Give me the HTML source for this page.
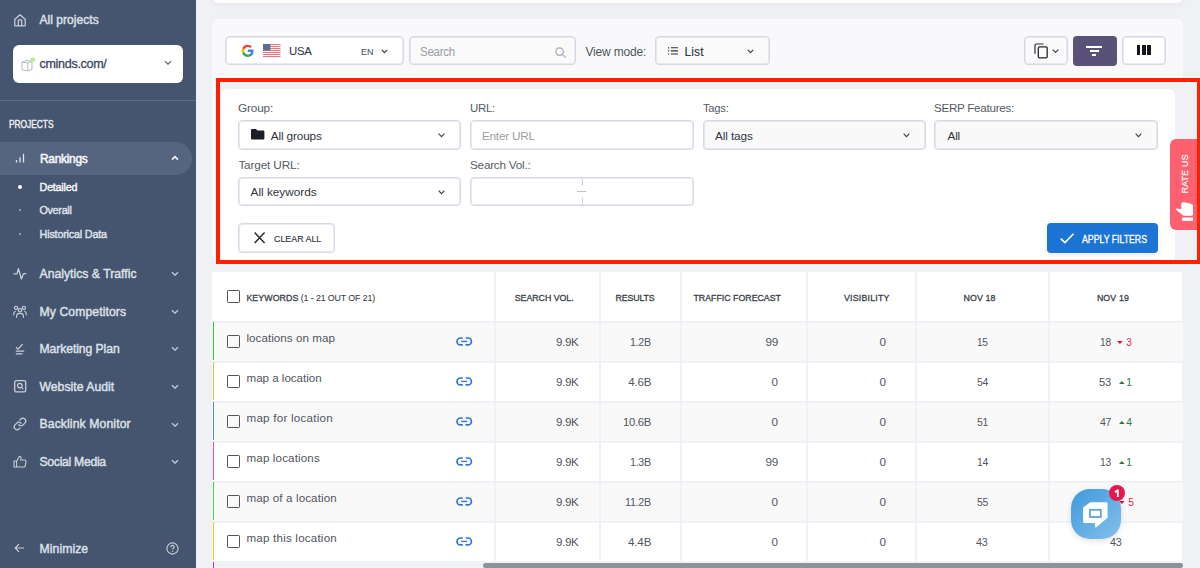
<!DOCTYPE html>
<html><head><meta charset="utf-8">
<style>
html,body{margin:0;padding:0;}
body{width:1200px;height:568px;overflow:hidden;position:relative;background:#f0f1f5;font-family:"Liberation Sans",sans-serif;}
.t{position:absolute;white-space:nowrap;line-height:1;}
svg{overflow:visible;}
</style></head><body>
<div style="position:absolute;left:0px;top:0px;width:196px;height:568px;background:#46556f;"></div>
<svg style="position:absolute;left:14px;top:14px" width="12" height="13" viewBox="0 0 12 13"><path d="M0.8 11.4V5.3L6 0.8L11.2 5.3V11.4Q11.2 11.9 10.7 11.9H1.3Q0.8 11.9 0.8 11.4Z M4.3 11.9V6.6Q4.3 5.9 5 5.9H7Q7.7 5.9 7.7 6.6V11.9" fill="none" stroke="#c9ced8" stroke-width="1.25" stroke-linejoin="round"/></svg>
<div class="t" style="left:39.50px;top:14px;font-size:12px;color:#dde1e8;-webkit-text-stroke:0.42px #dde1e8;letter-spacing:0.046px;">All projects</div>
<div style="position:absolute;left:13px;top:45px;width:170px;height:38px;background:#fff;border-radius:6px;"></div>
<svg style="position:absolute;left:21px;top:57px" width="15" height="15" viewBox="0 0 15 15"><path d="M1 5.2L5 3.6L11 4.4L11 12.2L6.8 13.8L1 12.8Z M1 5.2L6.8 6L11 4.4 M6.8 6V13.8" fill="none" stroke="#b4b7bd" stroke-width="0.95" stroke-linejoin="round"/><rect x="9.8" y="0.4" width="4.4" height="4.4" rx="1.6" fill="#b3ef8f"/></svg>
<div class="t" style="left:39.50px;top:58px;font-size:12.5px;color:#3a4660;-webkit-text-stroke:0.3px #3a4660;letter-spacing:-0.286px;">cminds.com/</div>
<svg style="position:absolute;left:164px;top:60px" width="8" height="6" viewBox="0 0 8 6"><path d="M1 1.2L4 4.2L7 1.2" fill="none" stroke="#555c66" stroke-width="1.2"/></svg>
<div style="position:absolute;left:0px;top:100px;width:196px;height:1px;background:#5e6c86;"></div>
<div class="t" style="left:8.80px;top:120px;font-size:10.3px;color:#eef0f4;transform:scaleX(0.8152);transform-origin:0.00px 0;-webkit-text-stroke:0.4px #eef0f4;letter-spacing:-0.050px;">PROJECTS</div>
<div style="position:absolute;left:0px;top:141.7px;width:191.5px;height:33.3px;background:#56657f;border-radius:0 17px 17px 0;"></div>
<svg style="position:absolute;left:15px;top:153px" width="10" height="10" viewBox="0 0 10 10"><path d="M1.5 9.5V7 M5 9.5V4.2 M8.5 9.5V0.8" stroke="#dfe3ea" stroke-width="1.3"/></svg>
<div class="t" style="left:39.75px;top:153px;font-size:12.2px;color:#f6f7f9;transform:scaleX(0.9793);transform-origin:0.00px 0;-webkit-text-stroke:0.5px #f6f7f9;letter-spacing:-0.300px;">Rankings</div>
<svg style="position:absolute;left:171px;top:155px" width="8" height="6" viewBox="0 0 8 6"><path d="M1 4.6L4 1.6L7 4.6" fill="none" stroke="#f4f5f8" stroke-width="1.5"/></svg>
<div style="position:absolute;left:18px;top:184.7px;width:4px;height:4px;background:#fff;border-radius:50%;"></div>
<div class="t" style="left:39.60px;top:182px;font-size:10.8px;color:#f4f5f8;-webkit-text-stroke:0.42px #f4f5f8;letter-spacing:-0.261px;">Detailed</div>
<div style="position:absolute;left:19px;top:209.2px;width:2px;height:2px;background:#8e98aa;"></div>
<div class="t" style="left:39.40px;top:205px;font-size:10.8px;color:#dde1e8;-webkit-text-stroke:0.42px #dde1e8;letter-spacing:-0.286px;">Overall</div>
<div style="position:absolute;left:19px;top:232.5px;width:2px;height:2px;background:#8e98aa;"></div>
<div class="t" style="left:39.60px;top:229px;font-size:10.8px;color:#dde1e8;-webkit-text-stroke:0.42px #dde1e8;letter-spacing:-0.195px;">Historical Data</div>
<div class="t" style="left:39.50px;top:268px;font-size:12.2px;color:#dde1e8;-webkit-text-stroke:0.42px #dde1e8;letter-spacing:0.020px;">Analytics &amp; Traffic</div>
<svg style="position:absolute;left:171px;top:271.0px" width="8" height="6" viewBox="0 0 8 6"><path d="M1 1.2L4 4.2L7 1.2" fill="none" stroke="#c9ced8" stroke-width="1.3"/></svg>
<div class="t" style="left:39.50px;top:306px;font-size:12.2px;color:#dde1e8;-webkit-text-stroke:0.42px #dde1e8;letter-spacing:0.098px;">My Competitors</div>
<svg style="position:absolute;left:171px;top:308.9px" width="8" height="6" viewBox="0 0 8 6"><path d="M1 1.2L4 4.2L7 1.2" fill="none" stroke="#c9ced8" stroke-width="1.3"/></svg>
<div class="t" style="left:39.50px;top:343px;font-size:12.2px;color:#dde1e8;-webkit-text-stroke:0.42px #dde1e8;letter-spacing:-0.083px;">Marketing Plan</div>
<svg style="position:absolute;left:171px;top:346.4px" width="8" height="6" viewBox="0 0 8 6"><path d="M1 1.2L4 4.2L7 1.2" fill="none" stroke="#c9ced8" stroke-width="1.3"/></svg>
<div class="t" style="left:39.50px;top:381px;font-size:12.2px;color:#dde1e8;-webkit-text-stroke:0.42px #dde1e8;letter-spacing:0.027px;">Website Audit</div>
<svg style="position:absolute;left:171px;top:384.0px" width="8" height="6" viewBox="0 0 8 6"><path d="M1 1.2L4 4.2L7 1.2" fill="none" stroke="#c9ced8" stroke-width="1.3"/></svg>
<div class="t" style="left:39.50px;top:418px;font-size:12.2px;color:#dde1e8;-webkit-text-stroke:0.42px #dde1e8;letter-spacing:0.113px;">Backlink Monitor</div>
<svg style="position:absolute;left:171px;top:421.5px" width="8" height="6" viewBox="0 0 8 6"><path d="M1 1.2L4 4.2L7 1.2" fill="none" stroke="#c9ced8" stroke-width="1.3"/></svg>
<div class="t" style="left:39.50px;top:456px;font-size:12.2px;color:#dde1e8;-webkit-text-stroke:0.42px #dde1e8;letter-spacing:-0.287px;">Social Media</div>
<svg style="position:absolute;left:171px;top:458.9px" width="8" height="6" viewBox="0 0 8 6"><path d="M1 1.2L4 4.2L7 1.2" fill="none" stroke="#c9ced8" stroke-width="1.3"/></svg>
<svg style="position:absolute;left:13px;top:267px" width="14" height="14" viewBox="0 0 14 14"><path d="M1 6.8H3.6Q4 6.8 4.2 6.2L5.4 1.6L8.4 12L10.2 7.3Q10.5 6.7 11 6.7H12.8" fill="none" stroke="#c9ced8" stroke-width="1.3" stroke-linejoin="round" stroke-linecap="round"/></svg>
<svg style="position:absolute;left:13px;top:305px" width="14" height="13" viewBox="0 0 14 13"><g fill="none" stroke="#c9ced8" stroke-width="1.15" stroke-linecap="round"><circle cx="3" cy="2.8" r="1.6"/><circle cx="10.9" cy="2.8" r="1.6"/><circle cx="7" cy="5.3" r="1.7"/><path d="M3.6 12.3V11C3.6 9.2 5 8.3 7 8.3S10.4 9.2 10.4 11V12.3 M0.6 9.7C0.6 7.8 1.2 6.8 2.3 6.3 M13.4 9.7C13.4 7.8 12.8 6.8 11.7 6.3"/></g></svg>
<svg style="position:absolute;left:15px;top:342.5px" width="10" height="12" viewBox="0 0 10 12"><path d="M1 4.2L3 6.2L7.6 1.2" fill="none" stroke="#c9ced8" stroke-width="1.25"/><path d="M0.8 8.2H9.2 M0.8 10.9H7.4" fill="none" stroke="#c9ced8" stroke-width="1.3"/></svg>
<svg style="position:absolute;left:13.8px;top:380px" width="13" height="13" viewBox="0 0 13 13"><rect x="0.7" y="0.7" width="11" height="11.2" rx="1.6" fill="none" stroke="#c9ced8" stroke-width="1.3"/><circle cx="5.8" cy="5.6" r="2.3" fill="none" stroke="#c9ced8" stroke-width="1.2"/><path d="M7.5 7.3L9.2 9" stroke="#c9ced8" stroke-width="1.2"/></svg>
<svg style="position:absolute;left:13px;top:417px" width="14" height="14" viewBox="0 0 14 14"><g transform="scale(0.58)"><path d="M10 13a5 5 0 0 0 7.54.54l3-3a5 5 0 0 0-7.07-7.07l-1.72 1.71 M14 11a5 5 0 0 0-7.54-.54l-3 3a5 5 0 0 0 7.07 7.07l1.71-1.71" fill="none" stroke="#c9ced8" stroke-width="2.1" stroke-linecap="round"/></g></svg>
<svg style="position:absolute;left:13px;top:455px" width="14" height="13" viewBox="0 0 14 13"><path d="M1 6H3.6V12H1Z M3.6 6.2L6.4 1.2C7.6 1.2 8.2 2 8 3.2L7.6 5H11.6C12.6 5 13.2 5.8 13 6.8L12.2 11C12 11.7 11.5 12 10.8 12H3.6" fill="none" stroke="#c9ced8" stroke-width="1.1" stroke-linejoin="round"/></svg>
<svg style="position:absolute;left:14px;top:543px" width="11" height="10" viewBox="0 0 11 10"><path d="M10 5H1.5 M5 1.2L1.2 5L5 8.8" fill="none" stroke="#c9ced8" stroke-width="1.2"/></svg>
<div class="t" style="left:39.50px;top:543px;font-size:12.2px;color:#dde1e8;-webkit-text-stroke:0.42px #dde1e8;letter-spacing:0.082px;">Minimize</div>
<svg style="position:absolute;left:166px;top:541.5px" width="13" height="13" viewBox="0 0 13 13"><circle cx="6.5" cy="6.5" r="5.6" fill="none" stroke="#c9ced8" stroke-width="1.1"/><path d="M4.8 5.2C4.8 4 5.6 3.4 6.5 3.4S8.2 4 8.2 5C8.2 6.2 6.6 6.3 6.6 7.6" fill="none" stroke="#c9ced8" stroke-width="1.1"/><circle cx="6.6" cy="9.4" r="0.7" fill="#c9ced8"/></svg>
<div style="position:absolute;left:213px;top:-12px;width:970px;height:14.6px;background:#fff;border-radius:6px;box-shadow:0 2px 5px rgba(60,70,100,0.05);"></div>
<div style="position:absolute;left:212px;top:19px;width:971px;height:240px;background:#f9f9fb;border-radius:6px;"></div>
<div style="position:absolute;left:225px;top:36px;width:179px;height:29px;box-sizing:border-box;border:1px solid #d6d9e5;box-shadow:inset 0 0 0 1px rgba(214,217,229,0.55);border-radius:4px;background:#fff;"></div>
<svg style="position:absolute;left:241px;top:43.8px" width="13.5" height="13.5" viewBox="0 0 13.5 13.5"><path d="M12.6 6.9c0-.45-.04-.9-.12-1.3H6.75v2.5h3.3a2.8 2.8 0 0 1-1.2 1.85v1.55h1.95c1.15-1.05 1.8-2.6 1.8-4.6z" fill="#4285F4"/><path d="M6.75 12.9c1.65 0 3.05-.55 4.05-1.45L8.85 9.9c-.55.35-1.25.6-2.1.6-1.6 0-2.95-1.1-3.45-2.55H1.3v1.6a6.1 6.1 0 0 0 5.45 3.35z" fill="#34A853"/><path d="M3.3 7.95a3.7 3.7 0 0 1 0-2.35V4H1.3a6.1 6.1 0 0 0 0 5.5z" fill="#FBBC05"/><path d="M6.75 3.1c.9 0 1.7.3 2.35.9l1.75-1.75A5.9 5.9 0 0 0 6.75.65 6.1 6.1 0 0 0 1.3 4l2 1.6C3.8 4.15 5.15 3.1 6.75 3.1z" fill="#EA4335"/></svg>
<svg style="position:absolute;left:262.5px;top:43.8px" width="17.5" height="14" viewBox="0 0 17.5 14"><rect x="0" y="0" width="17.5" height="14" rx="1" fill="#fff"/><rect x="0" y="0" width="17.5" height="1.1" fill="#e27782"/><rect x="0" y="2" width="17.5" height="1.1" fill="#e27782"/><rect x="0" y="4" width="17.5" height="1.1" fill="#e27782"/><rect x="0" y="6" width="17.5" height="1.1" fill="#e27782"/><rect x="0" y="8" width="17.5" height="1.1" fill="#e27782"/><rect x="0" y="10" width="17.5" height="1.1" fill="#e27782"/><rect x="0" y="12" width="17.5" height="1.1" fill="#e27782"/><rect x="0" y="0" width="7.5" height="6.5" fill="#5f6d90"/></svg>
<div class="t" style="left:288.75px;top:46px;font-size:11.8px;color:#343a44;transform:scaleX(0.9615);transform-origin:0.00px 0;-webkit-text-stroke:0.1px #343a44;letter-spacing:-0.300px;">USA</div>
<div class="t" style="left:361.00px;top:47px;font-size:9.8px;color:#444a54;transform:scaleX(0.9143);transform-origin:0.00px 0;letter-spacing:-0.050px;">EN</div>
<svg style="position:absolute;left:380.5px;top:48.5px" width="7" height="5" viewBox="0 0 7 5"><path d="M0.8 0.8L3.5 3.6L6.2 0.8" fill="none" stroke="#3a3f48" stroke-width="1.2"/></svg>
<div style="position:absolute;left:409px;top:36px;width:167px;height:29px;box-sizing:border-box;border:1px solid #d6d9e5;box-shadow:inset 0 0 0 1px rgba(214,217,229,0.55);border-radius:4px;background:#fafafb;"></div>
<div class="t" style="left:420.30px;top:46px;font-size:12px;color:#9a9ea6;transform:scaleX(0.9612);transform-origin:0.00px 0;letter-spacing:-0.300px;">Search</div>
<svg style="position:absolute;left:555px;top:46.5px" width="12" height="11" viewBox="0 0 12 11"><circle cx="4.6" cy="4.6" r="3.8" fill="none" stroke="#a5a9b0" stroke-width="1.2"/><path d="M7.4 7.4L10.8 10.6" stroke="#a5a9b0" stroke-width="1.2"/></svg>
<div class="t" style="left:585.40px;top:46px;font-size:12px;color:#50565e;letter-spacing:-0.176px;">View mode:</div>
<div style="position:absolute;left:655px;top:36px;width:115px;height:29px;box-sizing:border-box;border:1px solid #d6d9e5;box-shadow:inset 0 0 0 1px rgba(214,217,229,0.55);border-radius:4px;background:#fafafb;"></div>
<svg style="position:absolute;left:668px;top:46.7px" width="10" height="8" viewBox="0 0 10 8"><path d="M0 0.8H1.2 M0 3.9H1.2 M0 7H1.2" stroke="#333" stroke-width="1.2"/><path d="M2.8 0.8H10 M2.8 3.9H10 M2.8 7H10" stroke="#333" stroke-width="1.1"/></svg>
<div class="t" style="left:684.50px;top:46px;font-size:12px;color:#30353d;-webkit-text-stroke:0.1px #30353d;letter-spacing:0.109px;">List</div>
<svg style="position:absolute;left:746.5px;top:49px" width="7" height="5" viewBox="0 0 7 5"><path d="M0.8 0.8L3.5 3.6L6.2 0.8" fill="none" stroke="#3a3f48" stroke-width="1.2"/></svg>
<div style="position:absolute;left:1024px;top:36px;width:44px;height:29px;box-sizing:border-box;border:1px solid #d6d9e5;box-shadow:inset 0 0 0 1px rgba(214,217,229,0.55);border-radius:4px;background:#fafafb;"></div>
<svg style="position:absolute;left:1033.5px;top:43px" width="14" height="15.5" viewBox="0 0 14 15.5"><path d="M1 10.8V2.2C1 1.5 1.5 1 2.2 1H9.5" fill="none" stroke="#2a2e35" stroke-width="1.2"/><rect x="4.3" y="3.8" width="8.9" height="11" rx="1.2" fill="none" stroke="#22262c" stroke-width="1.3"/></svg>
<svg style="position:absolute;left:1052.3px;top:48.6px" width="7" height="5" viewBox="0 0 7 5"><path d="M0.7 0.7L3.5 3.5L6.3 0.7" fill="none" stroke="#3a3f48" stroke-width="1.1"/></svg>
<div style="position:absolute;left:1073px;top:36px;width:44px;height:30px;border-radius:4px;background:#5a5178;"></div>
<div style="position:absolute;left:1086.3px;top:46px;width:15.7px;height:2px;background:#fff;"></div>
<div style="position:absolute;left:1089.7px;top:50px;width:9.3px;height:2px;background:#fff;"></div>
<div style="position:absolute;left:1092px;top:54px;width:4px;height:1.8px;background:#fff;"></div>
<div style="position:absolute;left:1122px;top:36px;width:44px;height:29px;box-sizing:border-box;border:1px solid #d6d9e5;box-shadow:inset 0 0 0 1px rgba(214,217,229,0.55);border-radius:4px;background:#fff;"></div>
<div style="position:absolute;left:1136.7px;top:45px;width:3.6px;height:10.3px;background:#15171c;"></div>
<div style="position:absolute;left:1142px;top:45px;width:3.6px;height:10.3px;background:#15171c;"></div>
<div style="position:absolute;left:1147.2px;top:45px;width:3.6px;height:10.3px;background:#15171c;"></div>
<div style="position:absolute;left:216px;top:78px;width:984px;height:186px;background:#f0f1f5;"></div>
<div style="position:absolute;left:221px;top:89px;width:954px;height:175px;background:#fff;border-radius:6px;"></div>
<div class="t" style="left:237.90px;top:103px;font-size:11.8px;color:#555b63;letter-spacing:-0.135px;">Group:</div>
<div class="t" style="left:470.00px;top:103px;font-size:11.8px;color:#555b63;transform:scaleX(0.9738);transform-origin:0.00px 0;letter-spacing:-0.300px;">URL:</div>
<div class="t" style="left:702.80px;top:103px;font-size:11.8px;color:#555b63;transform:scaleX(0.9555);transform-origin:0.00px 0;letter-spacing:-0.300px;">Tags:</div>
<div class="t" style="left:934.40px;top:103px;font-size:11.8px;color:#555b63;transform:scaleX(0.9884);transform-origin:0.00px 0;letter-spacing:-0.300px;">SERP Features:</div>
<div style="position:absolute;left:238px;top:120px;width:223px;height:30px;box-sizing:border-box;border:1px solid #d6d9e5;box-shadow:inset 0 0 0 1px rgba(214,217,229,0.55);border-radius:4px;background:#fff;"></div>
<div style="position:absolute;left:470px;top:120px;width:224px;height:30px;box-sizing:border-box;border:1px solid #d6d9e5;box-shadow:inset 0 0 0 1px rgba(214,217,229,0.55);border-radius:4px;background:#fff;"></div>
<div style="position:absolute;left:703px;top:120px;width:223px;height:30px;box-sizing:border-box;border:1px solid #d6d9e5;box-shadow:inset 0 0 0 1px rgba(214,217,229,0.55);border-radius:4px;background:#f9f9fa;"></div>
<div style="position:absolute;left:934px;top:120px;width:224px;height:30px;box-sizing:border-box;border:1px solid #d6d9e5;box-shadow:inset 0 0 0 1px rgba(214,217,229,0.55);border-radius:4px;background:#f9f9fa;"></div>
<svg style="position:absolute;left:250.6px;top:129.3px" width="13.4" height="10.6" viewBox="0 0 13.4 10.6"><path d="M0 1.2C0 .5.5 0 1.2 0H5L6.4 1.6H12.2C12.9 1.6 13.4 2.1 13.4 2.8V9.4C13.4 10.1 12.9 10.6 12.2 10.6H1.2C.5 10.6 0 10.1 0 9.4Z" fill="#1b1e27"/></svg>
<div class="t" style="left:270.70px;top:131px;font-size:11.8px;color:#30353d;letter-spacing:-0.142px;">All groups</div>
<div class="t" style="left:481.90px;top:131px;font-size:11.8px;color:#9a9ea6;letter-spacing:-0.235px;">Enter URL</div>
<div class="t" style="left:715.10px;top:131px;font-size:11.8px;color:#30353d;letter-spacing:-0.127px;">All tags</div>
<div class="t" style="left:947.50px;top:131px;font-size:11.8px;color:#30353d;letter-spacing:-0.205px;">All</div>
<svg style="position:absolute;left:438.2px;top:133px" width="7" height="4.4" viewBox="0 0 7 4.4"><path d="M0.6 0.6L3.5 3.6L6.4 0.6" fill="none" stroke="#3a3f48" stroke-width="1.15"/></svg>
<svg style="position:absolute;left:902.8px;top:133px" width="7" height="4.4" viewBox="0 0 7 4.4"><path d="M0.6 0.6L3.5 3.6L6.4 0.6" fill="none" stroke="#3a3f48" stroke-width="1.15"/></svg>
<svg style="position:absolute;left:1135.2px;top:133px" width="7" height="4.4" viewBox="0 0 7 4.4"><path d="M0.6 0.6L3.5 3.6L6.4 0.6" fill="none" stroke="#3a3f48" stroke-width="1.15"/></svg>
<div class="t" style="left:238.40px;top:160px;font-size:11.8px;color:#555b63;letter-spacing:-0.165px;">Target URL:</div>
<div class="t" style="left:470.00px;top:160px;font-size:11.8px;color:#555b63;letter-spacing:-0.266px;">Search Vol.:</div>
<div style="position:absolute;left:238px;top:177px;width:223px;height:29px;box-sizing:border-box;border:1px solid #d6d9e5;box-shadow:inset 0 0 0 1px rgba(214,217,229,0.55);border-radius:4px;background:#fff;"></div>
<div class="t" style="left:250.60px;top:187px;font-size:11.8px;color:#30353d;letter-spacing:-0.021px;">All keywords</div>
<svg style="position:absolute;left:438.2px;top:190px" width="7" height="4.4" viewBox="0 0 7 4.4"><path d="M0.6 0.6L3.5 3.6L6.4 0.6" fill="none" stroke="#3a3f48" stroke-width="1.15"/></svg>
<div style="position:absolute;left:470px;top:177px;width:224px;height:29px;box-sizing:border-box;border:1px solid #d6d9e5;box-shadow:inset 0 0 0 1px rgba(214,217,229,0.55);border-radius:4px;background:#fff;"></div>
<div style="position:absolute;left:581.6px;top:178.5px;width:1.2px;height:7px;background:#cdd0da;"></div>
<div style="position:absolute;left:581.6px;top:197.5px;width:1.2px;height:7px;background:#cdd0da;"></div>
<div style="position:absolute;left:577px;top:190.6px;width:9px;height:1.3px;background:#bfc3cc;"></div>
<div style="position:absolute;left:238px;top:223px;width:97px;height:30px;box-sizing:border-box;border:1px solid #d6d9e5;box-shadow:inset 0 0 0 1px rgba(214,217,229,0.55);border-radius:4px;background:#fff;"></div>
<svg style="position:absolute;left:253.7px;top:232.4px" width="11.2" height="11.5" viewBox="0 0 11.2 11.5"><path d="M0.6 0.6L10.6 10.9 M10.6 0.6L0.6 10.9" stroke="#22262c" stroke-width="1.4"/></svg>
<div class="t" style="left:273.90px;top:234px;font-size:9.4px;color:#30353d;transform:scaleX(0.9450);transform-origin:0.00px 0;-webkit-text-stroke:0.15px #30353d;">CLEAR ALL</div>
<div style="position:absolute;left:1046.9px;top:223.3px;width:111.1px;height:29.7px;border-radius:4px;background:#1c74d4;box-shadow:0 2px 5px rgba(0,0,0,0.08);"></div>
<svg style="position:absolute;left:1060px;top:233px" width="14.4" height="10.7" viewBox="0 0 14.4 10.7"><path d="M0.8 5.6L4.9 9.6L13.6 0.8" fill="none" stroke="#fff" stroke-width="1.6"/></svg>
<div class="t" style="left:1081.60px;top:235px;font-size:10.2px;color:#ffffff;transform:scaleX(0.8639);transform-origin:0.00px 0;-webkit-text-stroke:0.3px #ffffff;letter-spacing:-0.050px;">APPLY FILTERS</div>
<div style="position:absolute;left:212px;top:272px;width:970px;height:296px;background:#fff;"></div>
<div style="position:absolute;left:212px;top:321px;width:971px;height:40px;background:#f9f9fa;"></div>
<div style="position:absolute;left:212px;top:401px;width:971px;height:40px;background:#f9f9fa;"></div>
<div style="position:absolute;left:212px;top:481px;width:971px;height:40px;background:#f9f9fa;"></div>
<div style="position:absolute;left:212px;top:321px;width:971px;height:2px;background:#f0f1f6;"></div>
<div style="position:absolute;left:212px;top:361px;width:971px;height:2px;background:#f0f1f6;"></div>
<div style="position:absolute;left:212px;top:401px;width:971px;height:2px;background:#f0f1f6;"></div>
<div style="position:absolute;left:212px;top:441px;width:971px;height:2px;background:#f0f1f6;"></div>
<div style="position:absolute;left:212px;top:481px;width:971px;height:2px;background:#f0f1f6;"></div>
<div style="position:absolute;left:212px;top:521px;width:971px;height:2px;background:#f0f1f6;"></div>
<div style="position:absolute;left:212px;top:561px;width:971px;height:2px;background:#f0f1f6;"></div>
<div style="position:absolute;left:493.8px;top:272px;width:2px;height:296px;background:#f0f1f6;"></div>
<div style="position:absolute;left:598.7px;top:272px;width:2px;height:296px;background:#f0f1f6;"></div>
<div style="position:absolute;left:679.6px;top:272px;width:2px;height:296px;background:#f0f1f6;"></div>
<div style="position:absolute;left:806.2px;top:272px;width:2px;height:296px;background:#f0f1f6;"></div>
<div style="position:absolute;left:914.6px;top:272px;width:2px;height:296px;background:#f0f1f6;"></div>
<div style="position:absolute;left:1047.9px;top:272px;width:2px;height:296px;background:#f0f1f6;"></div>
<div style="position:absolute;left:212.5px;top:322px;width:1.5px;height:38px;background:#2ad62a;"></div>
<div style="position:absolute;left:212.5px;top:362px;width:1.5px;height:38px;background:#c9c93a;"></div>
<div style="position:absolute;left:212.5px;top:402px;width:1.5px;height:38px;background:#4a90e2;"></div>
<div style="position:absolute;left:212.5px;top:442px;width:1.5px;height:38px;background:#ff45b5;"></div>
<div style="position:absolute;left:212.5px;top:482px;width:1.5px;height:38px;background:#3ae03a;"></div>
<div style="position:absolute;left:212.5px;top:522px;width:1.5px;height:38px;background:#f2c81e;"></div>
<div class="t" style="left:246.40px;top:294px;font-size:8.8px;color:#3b4149;-webkit-text-stroke:0.3px #3b4149;letter-spacing:0.094px;">KEYWORDS</div>
<div class="t" style="left:300.70px;top:294px;font-size:8.8px;color:#3b4149;-webkit-text-stroke:0.1px #3b4149;letter-spacing:-0.089px;">(1 - 21 OUT OF 21)</div>
<div style="position:absolute;left:227.3px;top:290.3px;width:12.8px;height:12.4px;box-sizing:border-box;border:1.8px solid #52565c;border-radius:1.2px;"></div>
<div class="t" style="left:514.70px;top:294px;font-size:8.8px;color:#3b4149;-webkit-text-stroke:0.3px #3b4149;letter-spacing:-0.017px;">SEARCH VOL.</div>
<div class="t" style="left:615.50px;top:294px;font-size:8.8px;color:#3b4149;-webkit-text-stroke:0.3px #3b4149;letter-spacing:-0.122px;">RESULTS</div>
<div class="t" style="left:693.50px;top:294px;font-size:8.8px;color:#3b4149;-webkit-text-stroke:0.3px #3b4149;">TRAFFIC FORECAST</div>
<div class="t" style="left:844.00px;top:294px;font-size:8.8px;color:#3b4149;-webkit-text-stroke:0.3px #3b4149;letter-spacing:0.219px;">VISIBILITY</div>
<div class="t" style="left:963.60px;top:294px;font-size:8.8px;color:#3b4149;-webkit-text-stroke:0.3px #3b4149;letter-spacing:0.100px;">NOV 18</div>
<div class="t" style="left:1096.90px;top:294px;font-size:8.8px;color:#3b4149;-webkit-text-stroke:0.3px #3b4149;letter-spacing:0.120px;">NOV 19</div>
<div style="position:absolute;left:227.3px;top:335.2px;width:12.8px;height:12.4px;box-sizing:border-box;border:1.8px solid #52565c;border-radius:1.2px;"></div>
<div class="t" style="left:246.50px;top:332px;font-size:11.6px;color:#50555d;letter-spacing:0.047px;">locations on map</div>
<svg style="position:absolute;left:456px;top:337.2px" width="16.5" height="8.8" viewBox="0 0 16.5 8.8"><path d="M6.8 1H4.4A3.4 3.4 0 0 0 4.4 7.8H6.8 M9.6 1H12A3.4 3.4 0 0 1 12 7.8H9.6" fill="none" stroke="#2b79d6" stroke-width="1.7"/><path d="M5.2 4.4H11.2" stroke="#2b79d6" stroke-width="1.4"/></svg>
<div class="t" style="left:555.50px;top:336px;font-size:11.6px;color:#50555d;transform:scaleX(0.9930);transform-origin:0.00px 0;letter-spacing:-0.300px;">9.9K</div>
<div class="t" style="left:630.40px;top:336px;font-size:11.6px;color:#50555d;transform:scaleX(0.9146);transform-origin:0.00px 0;letter-spacing:-0.300px;">1.2B</div>
<div class="t" style="left:765.50px;top:336px;font-size:11.6px;color:#50555d;letter-spacing:-0.299px;">99</div>
<div class="t" style="left:879.40px;top:336px;font-size:11.6px;color:#50555d;">0</div>
<div class="t" style="left:976.80px;top:336px;font-size:11.6px;color:#50555d;transform:scaleX(0.8731);transform-origin:0.00px 0;letter-spacing:-0.300px;">15</div>
<div class="t" style="left:1100.45px;top:336px;font-size:11.6px;color:#50555d;transform:scaleX(0.8770);transform-origin:0.00px 0;letter-spacing:-0.300px;">18</div>
<svg style="position:absolute;left:1117.2px;top:341.4px" width="5.8" height="3" viewBox="0 0 5.8 3"><path d="M0.1 0.1H5.7L2.9 2.9Z" fill="#e0102a"/></svg>
<div class="t" style="left:1126.20px;top:338px;font-size:10.2px;color:#e2233b;">3</div>
<div style="position:absolute;left:227.3px;top:375.2px;width:12.8px;height:12.4px;box-sizing:border-box;border:1.8px solid #52565c;border-radius:1.2px;"></div>
<div class="t" style="left:246.50px;top:372px;font-size:11.6px;color:#50555d;letter-spacing:-0.019px;">map a location</div>
<svg style="position:absolute;left:456px;top:377.2px" width="16.5" height="8.8" viewBox="0 0 16.5 8.8"><path d="M6.8 1H4.4A3.4 3.4 0 0 0 4.4 7.8H6.8 M9.6 1H12A3.4 3.4 0 0 1 12 7.8H9.6" fill="none" stroke="#2b79d6" stroke-width="1.7"/><path d="M5.2 4.4H11.2" stroke="#2b79d6" stroke-width="1.4"/></svg>
<div class="t" style="left:555.50px;top:376px;font-size:11.6px;color:#50555d;transform:scaleX(0.9930);transform-origin:0.00px 0;letter-spacing:-0.300px;">9.9K</div>
<div class="t" style="left:628.20px;top:376px;font-size:11.6px;color:#50555d;letter-spacing:-0.220px;">4.6B</div>
<div class="t" style="left:771.40px;top:376px;font-size:11.6px;color:#50555d;">0</div>
<div class="t" style="left:879.40px;top:376px;font-size:11.6px;color:#50555d;">0</div>
<div class="t" style="left:976.65px;top:376px;font-size:11.6px;color:#50555d;transform:scaleX(0.8969);transform-origin:0.00px 0;letter-spacing:-0.300px;">54</div>
<div class="t" style="left:1099.40px;top:376px;font-size:11.6px;color:#50555d;transform:scaleX(0.9604);transform-origin:0.00px 0;letter-spacing:-0.300px;">53</div>
<svg style="position:absolute;left:1118.8px;top:381.2px" width="5.8" height="3" viewBox="0 0 5.8 3"><path d="M0.1 2.9H5.7L2.9 0.1Z" fill="#2a7247"/></svg>
<div class="t" style="left:1126.20px;top:378px;font-size:10.2px;color:#2f7a4a;">1</div>
<div style="position:absolute;left:227.3px;top:415.2px;width:12.8px;height:12.4px;box-sizing:border-box;border:1.8px solid #52565c;border-radius:1.2px;"></div>
<div class="t" style="left:246.50px;top:412px;font-size:11.6px;color:#50555d;letter-spacing:0.251px;">map for location</div>
<svg style="position:absolute;left:456px;top:417.2px" width="16.5" height="8.8" viewBox="0 0 16.5 8.8"><path d="M6.8 1H4.4A3.4 3.4 0 0 0 4.4 7.8H6.8 M9.6 1H12A3.4 3.4 0 0 1 12 7.8H9.6" fill="none" stroke="#2b79d6" stroke-width="1.7"/><path d="M5.2 4.4H11.2" stroke="#2b79d6" stroke-width="1.4"/></svg>
<div class="t" style="left:555.50px;top:416px;font-size:11.6px;color:#50555d;transform:scaleX(0.9930);transform-origin:0.00px 0;letter-spacing:-0.300px;">9.9K</div>
<div class="t" style="left:623.00px;top:416px;font-size:11.6px;color:#50555d;transform:scaleX(0.9756);transform-origin:0.00px 0;letter-spacing:-0.300px;">10.6B</div>
<div class="t" style="left:771.40px;top:416px;font-size:11.6px;color:#50555d;">0</div>
<div class="t" style="left:879.40px;top:416px;font-size:11.6px;color:#50555d;">0</div>
<div class="t" style="left:976.65px;top:416px;font-size:11.6px;color:#50555d;transform:scaleX(0.8969);transform-origin:0.00px 0;letter-spacing:-0.300px;">51</div>
<div class="t" style="left:1100.00px;top:416px;font-size:11.6px;color:#50555d;transform:scaleX(0.9128);transform-origin:0.00px 0;letter-spacing:-0.300px;">47</div>
<svg style="position:absolute;left:1118.8px;top:421.2px" width="5.8" height="3" viewBox="0 0 5.8 3"><path d="M0.1 2.9H5.7L2.9 0.1Z" fill="#2a7247"/></svg>
<div class="t" style="left:1126.20px;top:418px;font-size:10.2px;color:#2f7a4a;">4</div>
<div style="position:absolute;left:227.3px;top:455.2px;width:12.8px;height:12.4px;box-sizing:border-box;border:1.8px solid #52565c;border-radius:1.2px;"></div>
<div class="t" style="left:246.50px;top:452px;font-size:11.6px;color:#50555d;letter-spacing:0.144px;">map locations</div>
<svg style="position:absolute;left:456px;top:457.2px" width="16.5" height="8.8" viewBox="0 0 16.5 8.8"><path d="M6.8 1H4.4A3.4 3.4 0 0 0 4.4 7.8H6.8 M9.6 1H12A3.4 3.4 0 0 1 12 7.8H9.6" fill="none" stroke="#2b79d6" stroke-width="1.7"/><path d="M5.2 4.4H11.2" stroke="#2b79d6" stroke-width="1.4"/></svg>
<div class="t" style="left:555.50px;top:456px;font-size:11.6px;color:#50555d;transform:scaleX(0.9930);transform-origin:0.00px 0;letter-spacing:-0.300px;">9.9K</div>
<div class="t" style="left:630.30px;top:456px;font-size:11.6px;color:#50555d;transform:scaleX(0.9189);transform-origin:0.00px 0;letter-spacing:-0.300px;">1.3B</div>
<div class="t" style="left:765.50px;top:456px;font-size:11.6px;color:#50555d;letter-spacing:-0.299px;">99</div>
<div class="t" style="left:879.40px;top:456px;font-size:11.6px;color:#50555d;">0</div>
<div class="t" style="left:976.65px;top:456px;font-size:11.6px;color:#50555d;transform:scaleX(0.8969);transform-origin:0.00px 0;letter-spacing:-0.300px;">14</div>
<div class="t" style="left:1100.30px;top:456px;font-size:11.6px;color:#50555d;transform:scaleX(0.8889);transform-origin:0.00px 0;letter-spacing:-0.300px;">13</div>
<svg style="position:absolute;left:1118.8px;top:461.2px" width="5.8" height="3" viewBox="0 0 5.8 3"><path d="M0.1 2.9H5.7L2.9 0.1Z" fill="#2a7247"/></svg>
<div class="t" style="left:1126.20px;top:458px;font-size:10.2px;color:#2f7a4a;">1</div>
<div style="position:absolute;left:227.3px;top:495.2px;width:12.8px;height:12.4px;box-sizing:border-box;border:1.8px solid #52565c;border-radius:1.2px;"></div>
<div class="t" style="left:246.50px;top:492px;font-size:11.6px;color:#50555d;letter-spacing:0.122px;">map of a location</div>
<svg style="position:absolute;left:456px;top:497.2px" width="16.5" height="8.8" viewBox="0 0 16.5 8.8"><path d="M6.8 1H4.4A3.4 3.4 0 0 0 4.4 7.8H6.8 M9.6 1H12A3.4 3.4 0 0 1 12 7.8H9.6" fill="none" stroke="#2b79d6" stroke-width="1.7"/><path d="M5.2 4.4H11.2" stroke="#2b79d6" stroke-width="1.4"/></svg>
<div class="t" style="left:555.50px;top:496px;font-size:11.6px;color:#50555d;transform:scaleX(0.9930);transform-origin:0.00px 0;letter-spacing:-0.300px;">9.9K</div>
<div class="t" style="left:625.30px;top:496px;font-size:11.6px;color:#50555d;transform:scaleX(0.9238);transform-origin:0.00px 0;letter-spacing:-0.300px;">11.2B</div>
<div class="t" style="left:771.40px;top:496px;font-size:11.6px;color:#50555d;">0</div>
<div class="t" style="left:879.40px;top:496px;font-size:11.6px;color:#50555d;">0</div>
<div class="t" style="left:976.65px;top:496px;font-size:11.6px;color:#50555d;transform:scaleX(0.8969);transform-origin:0.00px 0;letter-spacing:-0.300px;">55</div>
<div class="t" style="left:1100.10px;top:496px;font-size:11.6px;color:#50555d;transform:scaleX(0.9048);transform-origin:0.00px 0;letter-spacing:-0.300px;">60</div>
<svg style="position:absolute;left:1119.2px;top:501.4px" width="5.8" height="3" viewBox="0 0 5.8 3"><path d="M0.1 0.1H5.7L2.9 2.9Z" fill="#e0102a"/></svg>
<div class="t" style="left:1128.20px;top:498px;font-size:10.2px;color:#e2233b;">5</div>
<div style="position:absolute;left:227.3px;top:535.2px;width:12.8px;height:12.4px;box-sizing:border-box;border:1.8px solid #52565c;border-radius:1.2px;"></div>
<div class="t" style="left:246.50px;top:532px;font-size:11.6px;color:#50555d;letter-spacing:0.203px;">map this location</div>
<svg style="position:absolute;left:456px;top:537.2px" width="16.5" height="8.8" viewBox="0 0 16.5 8.8"><path d="M6.8 1H4.4A3.4 3.4 0 0 0 4.4 7.8H6.8 M9.6 1H12A3.4 3.4 0 0 1 12 7.8H9.6" fill="none" stroke="#2b79d6" stroke-width="1.7"/><path d="M5.2 4.4H11.2" stroke="#2b79d6" stroke-width="1.4"/></svg>
<div class="t" style="left:555.50px;top:536px;font-size:11.6px;color:#50555d;transform:scaleX(0.9930);transform-origin:0.00px 0;letter-spacing:-0.300px;">9.9K</div>
<div class="t" style="left:628.00px;top:536px;font-size:11.6px;color:#50555d;letter-spacing:-0.154px;">4.4B</div>
<div class="t" style="left:771.40px;top:536px;font-size:11.6px;color:#50555d;">0</div>
<div class="t" style="left:879.40px;top:536px;font-size:11.6px;color:#50555d;">0</div>
<div class="t" style="left:976.45px;top:536px;font-size:11.6px;color:#50555d;transform:scaleX(0.9286);transform-origin:0.00px 0;letter-spacing:-0.300px;">43</div>
<div class="t" style="left:1109.90px;top:536px;font-size:11.6px;color:#50555d;transform:scaleX(0.9286);transform-origin:0.00px 0;letter-spacing:-0.300px;">43</div>
<div style="position:absolute;left:212px;top:561px;width:971px;height:7px;background:#f1f2f4;"></div>
<div style="position:absolute;left:212.5px;top:562px;width:1.5px;height:6px;background:#b42ed8;"></div>
<div style="position:absolute;left:483px;top:563px;width:700px;height:5px;background:#8a939a;border-radius:3px;"></div>
<div style="position:absolute;left:1170px;top:139.1px;width:40px;height:90.6px;background:#fd6170;border-radius:6px 0 0 6px;"></div>
<div class="t" style="left:1185.5px;top:174.3px;font-size:9.2px;color:#fff;transform:translate(-50%,-50%) rotate(-90deg);-webkit-text-stroke:0.15px #fff;letter-spacing:0px;">RATE US</div>
<svg style="position:absolute;left:1175px;top:201px" width="19" height="21" viewBox="0 0 19 21"><path d="M7.8 1.2C9 0.8 15 2.2 16.6 3C17.6 3.5 18 4.2 18 5.2V13.6C18 14.2 17.6 14.7 17 14.7H8.4L1.2 9C0.5 8.4 1 7.5 2 7.4L6.3 8.2V2.6C6.3 1.9 7 1.4 7.8 1.2Z" fill="#fff"/><rect x="7.2" y="16.5" width="10.8" height="3.4" fill="#fff"/></svg>
<div style="position:absolute;left:216px;top:78px;width:985px;height:186px;box-sizing:border-box;border:4px solid #ff2000;"></div>
<div style="position:absolute;left:1070.8px;top:488.6px;width:50px;height:50px;border-radius:19px;background:linear-gradient(135deg,#4099dd 0%,#84c0ea 100%);box-shadow:0 2px 6px rgba(0,0,0,0.12);"></div>
<svg style="position:absolute;left:1082px;top:501px" width="27" height="28" viewBox="0 0 27 28"><path d="M1.1 6.6L8.3 1.2H24.6Q25.6 1.2 25.6 2.2V16.8L13.4 26.9L12.8 22H2.1Q1.1 22 1.1 21Z" fill="#fff"/><rect x="8" y="8.8" width="10.8" height="7.2" fill="none" stroke="#5ea3dc" stroke-width="1.8"/></svg>
<div style="position:absolute;left:1108.6px;top:484.8px;width:16.4px;height:16.4px;border-radius:50%;background:#e8174b;"></div>
<svg style="position:absolute;left:1114px;top:489px" width="6" height="9" viewBox="0 0 6 9"><path d="M0.6 2.2L3.2 0.6H4.8V8H2.9V3L1.4 3.9Z" fill="#fff"/></svg>
</body></html>
